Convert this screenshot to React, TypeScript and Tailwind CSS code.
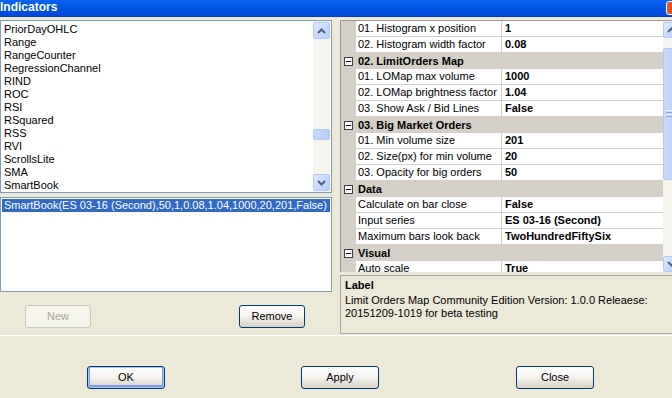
import React from 'react';

type Row =
  | { kind: 'cat'; label: string }
  | { kind: 'prop'; name: string; value: string };

const INDICATORS = [
  'PriorDayOHLC', 'Range', 'RangeCounter', 'RegressionChannel', 'RIND', 'ROC', 'RSI',
  'RSquared', 'RSS', 'RVI', 'ScrollsLite', 'SMA', 'SmartBook',
];

const ROWS: Row[] = [
  { kind: 'prop', name: '01. Histogram x position', value: '1' },
  { kind: 'prop', name: '02. Histogram width factor', value: '0.08' },
  { kind: 'cat', label: '02. LimitOrders Map' },
  { kind: 'prop', name: '01. LOMap max volume', value: '1000' },
  { kind: 'prop', name: '02. LOMap brightness factor', value: '1.04' },
  { kind: 'prop', name: '03. Show Ask / Bid Lines', value: 'False' },
  { kind: 'cat', label: '03. Big Market Orders' },
  { kind: 'prop', name: '01. Min volume size', value: '201' },
  { kind: 'prop', name: '02. Size(px) for min volume', value: '20' },
  { kind: 'prop', name: '03. Opacity for big orders', value: '50' },
  { kind: 'cat', label: 'Data' },
  { kind: 'prop', name: 'Calculate on bar close', value: 'False' },
  { kind: 'prop', name: 'Input series', value: 'ES 03-16 (Second)' },
  { kind: 'prop', name: 'Maximum bars look back', value: 'TwoHundredFiftySix' },
  { kind: 'cat', label: 'Visual' },
  { kind: 'prop', name: 'Auto scale', value: 'True' },
];

// XP scrollbar arrow button
function ScrollBtn({ dir, h = 17 }: { dir: 'up' | 'down'; h?: number }) {
  return (
    <div
      className="w-[17px] shrink-0 rounded-[2px] border border-[#b3c8f5] bg-gradient-to-br from-[#dfe9fe] to-[#b8cdf9] flex items-center justify-center"
      style={{ height: h }}
    >
      <svg width="9" height="6" viewBox="0 0 9 6">
        {dir === 'up' ? (
          <path d="M1 5 L4.5 1.5 L8 5" fill="none" stroke="#4d6185" strokeWidth="2" />
        ) : (
          <path d="M1 1 L4.5 4.5 L8 1" fill="none" stroke="#4d6185" strokeWidth="2" />
        )}
      </svg>
    </div>
  );
}

function XpButton({ label, disabled, isDefault, w = 78 }: { label: string; disabled?: boolean; isDefault?: boolean; w?: number }) {
  if (disabled) {
    return (
      <div className="h-[23px] rounded-[3px] border border-[#c9c7ba] bg-[#f5f4ea] text-[#aca899] flex items-center justify-center" style={{ width: w }}>
        {label}
      </div>
    );
  }
  return (
    <div
      className={`h-[23px] rounded-[3px] border border-[#003c74] bg-gradient-to-b from-white via-[#f4f3ee] to-[#d6d0c5] text-black flex items-center justify-center ${isDefault ? 'shadow-[inset_0_0_0_1px_#a9c4f3,inset_0_-1px_0_2px_#7c9fe6]' : ''}`}
      style={{ width: w }}
    >
      {label}
    </div>
  );
}

export default function App() {
  return (
    <div className="w-[672px] h-[398px] overflow-hidden bg-[#ece9d8] font-['Liberation_Sans',Arial,sans-serif] text-[11px] leading-[13px] text-black">
      {/* title bar */}
      <div className="h-[17px] flex items-center bg-gradient-to-b from-[#0a62ee] via-[#0055e5] to-[#0048d8] border-b border-[#003fc0]">
        <span className="text-white font-bold text-[12px] leading-[17px] -mt-[2px]">Indicators</span>
        <div className="ml-auto mr-[-15px] mt-[-1px] w-[21px] h-[14px] rounded-[3px] border border-white bg-[#e0542b]" />
      </div>

      <div className="flex pt-[3px] h-[318px]">
        {/* left side */}
        <div className="w-[332px] shrink-0 flex flex-col">
          <div className="h-[173px] border border-[#7f9db9] bg-white flex">
            <div className="flex-1 pt-[2px] pl-[3px]">
              {INDICATORS.map(n => (
                <div key={n} className="h-[13px] whitespace-nowrap">{n}</div>
              ))}
            </div>
            <div className="w-[17px] bg-[#f5f4ef] flex flex-col py-[1px] mr-[1px]">
              <ScrollBtn dir="up" />
              <div className="h-[90px]" />
              <div className="h-[11px] rounded-[2px] border border-[#b3c8f5] bg-gradient-to-r from-[#c9d9fd] to-[#b9ccf8]" />
              <div className="flex-1" />
              <ScrollBtn dir="down" />
            </div>
          </div>

          <div className="h-[95px] mt-[4px] border border-[#7f9db9] bg-white p-[1px]">
            <div className="h-[13px] bg-[#316ac5] text-white pl-[2px] whitespace-nowrap">
              SmartBook(ES 03-16 (Second),50,1,0.08,1.04,1000,20,201,False)
            </div>
          </div>

          <div className="flex mt-[13px]">
            <div className="ml-[25px]"><XpButton label="New" disabled w={66} /></div>
            <div className="ml-[148px]"><XpButton label="Remove" w={66} /></div>
          </div>
        </div>

        {/* right side */}
        <div className="ml-[8px] w-[345px] shrink-0 flex flex-col">
          <div className="h-[252px] border-t border-l border-[#9a9a9a] bg-[#d4d0c8] flex overflow-hidden">
            <div className="w-[322px] shrink-0">
              {ROWS.map((r, i) =>
                r.kind === 'cat' ? (
                  <div key={i} className="h-[16px] flex items-center bg-[#d4d0c8]">
                    <div className="w-[15px] flex justify-center">
                      <div className="w-[9px] h-[9px] border border-[#404040] bg-white flex items-center justify-center">
                        <div className="w-[5px] h-[1px] bg-black" />
                      </div>
                    </div>
                    <span className="pl-[2px] font-bold whitespace-nowrap">{r.label}</span>
                  </div>
                ) : (
                  <div key={i} className="h-[16px] flex">
                    <div className="w-[15px] shrink-0 bg-[#d4d0c8]" />
                    <div className="w-[145px] shrink-0 bg-white border-b border-[#d4d0c8] pl-[2px] leading-[15px] whitespace-nowrap overflow-hidden">
                      {r.name}
                    </div>
                    <div className="w-[1px] bg-[#d4d0c8]" />
                    <div className="flex-1 bg-white border-b border-[#d4d0c8] pl-[3px] leading-[15px] font-bold whitespace-nowrap overflow-hidden">
                      {r.value}
                    </div>
                  </div>
                )
              )}
            </div>
            {/* grid scrollbar */}
            <div className="w-[17px] shrink-0 bg-[#f5f4ef] flex flex-col pt-[1px]">
              <ScrollBtn dir="up" h={16} />
              <div className="h-[10px]" />
              <div className="h-[135px] rounded-[2px] border border-[#b3c8f5] bg-gradient-to-r from-[#c9d9fd] to-[#b9ccf8] flex flex-col items-start justify-center gap-[1px] pl-[2px]">
                <div className="w-[6px] h-[1px] bg-[#eef3fe]" />
                <div className="w-[6px] h-[1px] bg-[#8aa4e0]" />
                <div className="w-[6px] h-[1px] bg-[#eef3fe]" />
                <div className="w-[6px] h-[1px] bg-[#8aa4e0]" />
              </div>
              <div className="h-[78px]" />
              <ScrollBtn dir="down" h={16} />
            </div>
          </div>

          <div className="h-[59px] mt-[3px] border border-[#a7a6aa] pl-[4px] pt-[3px]">
            <div className="font-bold mb-[2px]">Label</div>
            <div className="whitespace-nowrap">Limit Orders Map Community Edition Version: 1.0.0 Releaese:</div>
            <div className="whitespace-nowrap">20151209-1019 for beta testing</div>
          </div>
        </div>
      </div>

      <div className="h-[1px] bg-white" />

      <div className="flex mt-[30px]">
        <div className="ml-[87px]"><XpButton label="OK" isDefault /></div>
        <div className="ml-[136px]"><XpButton label="Apply" /></div>
        <div className="ml-[137px]"><XpButton label="Close" /></div>
      </div>
    </div>
  );
}
